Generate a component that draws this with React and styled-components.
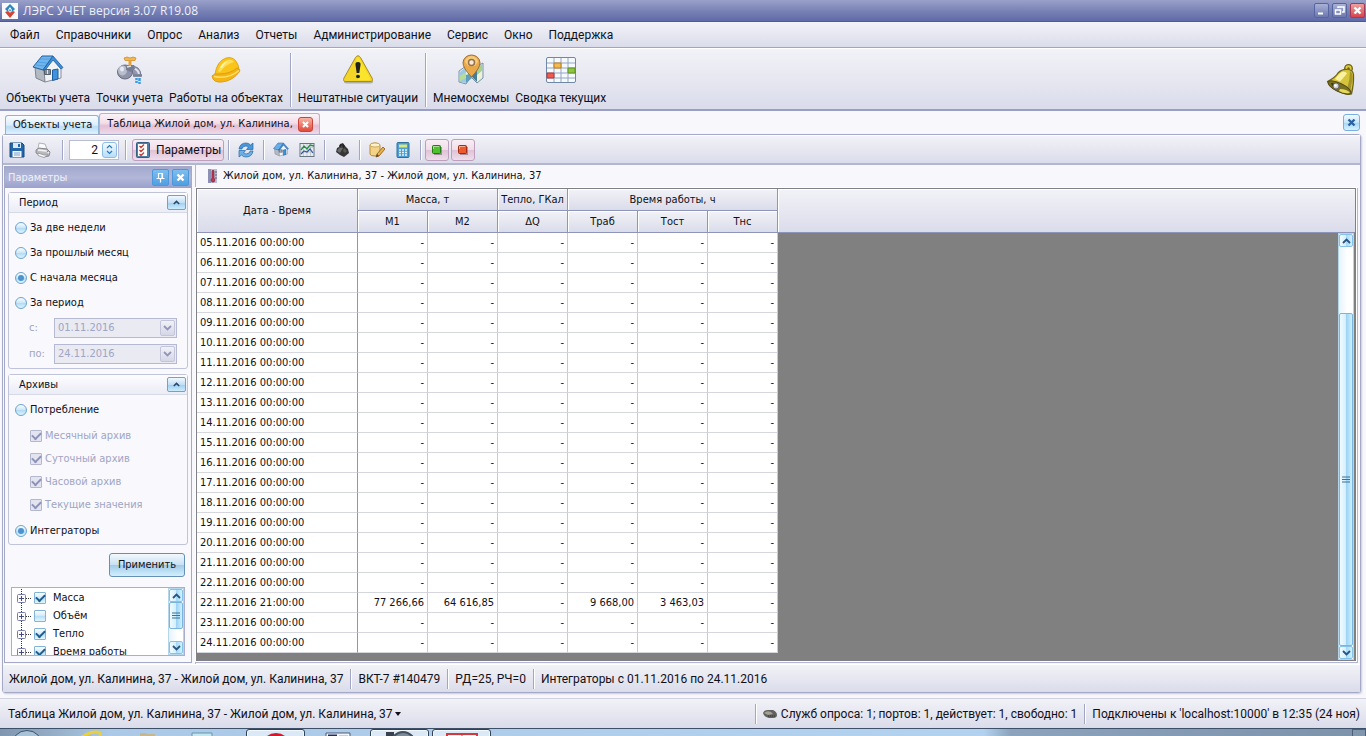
import { useState } from "react";
import styled, { createGlobalStyle, css } from "styled-components";

const ui = `Roboto, "Noto Sans", sans-serif`;
const small = `"DejaVu Sans Condensed", "DejaVu Sans", sans-serif`;

const GlobalStyle = createGlobalStyle`
  * {
    box-sizing: border-box;
  }
  body {
    margin: 0;
    font-family: ${ui};
    font-size: 12px;
    line-height: 16px;
    color: #101018;
    background: #f8f8fc;
  }
  button, input {
    font: inherit;
    color: inherit;
    margin: 0;
    padding: 0;
  }
`;

const barFill = css`
  background: linear-gradient(#f2f2f8, #e6e7f0 50%, #dadceb);
`;

const Window = styled.div`
  display: flex;
  flex-direction: column;
  height: 100vh;
  overflow: hidden;
  white-space: nowrap;
`;

const TitleBar = styled.header`
  display: flex;
  align-items: center;
  gap: 5px;
  height: 22px;
  padding: 0 1px 0 2px;
  background: linear-gradient(#9aa1c9, #7983b6 50%, #5f6ba7);
  border-bottom: 1px solid #4e5a94;
  color: #eef0fa;
  font-family: "Open Sans", ${small};
`;

const TitleText = styled.span`
  flex: 1;
`;

const WindowButton = styled.button`
  display: flex;
  width: 15px;
  height: 15px;
  margin-left: -2px;
  border: 1px solid ${(props) => (props.$danger ? "#a33a50" : "#5664a0")};
  border-radius: 2px;
  background: ${(props) =>
    props.$danger
      ? "linear-gradient(#f0a0a0, #d8434c)"
      : "linear-gradient(#a9b1d5, #6c78b0)"};
`;

const MenuBar = styled.nav`
  display: flex;
  align-items: center;
  gap: 16px;
  height: 26px;
  padding: 0 10px;
  ${barFill}
  border-bottom: 1px solid #9fa5c6;
`;

const MenuLink = styled.a`
  color: inherit;
  text-decoration: none;
`;

const MainBar = styled.div`
  display: flex;
  align-items: center;
  height: 63px;
  padding: 2px 8px 0 3px;
  ${barFill}
  border-top: 1px solid #fff;
  border-bottom: 2px solid #9a9fc4;
`;

const MainButton = styled.button`
  display: flex;
  flex-direction: column;
  align-items: center;
  gap: 4px;
  padding: 0 3px;
  border: 0;
  background: none;
`;

const BarDivider = styled.i`
  width: 1px;
  height: ${(props) => props.$height || 20}px;
  margin: 0 ${(props) => props.$gap || 4}px;
  background: #a0a6c4;
  box-shadow: 1px 0 #fff;
`;

const Spacer = styled.span`
  flex: 1;
`;

const TabStrip = styled.div`
  display: flex;
  align-items: flex-end;
  height: 23px;
  padding: 0 6px 0 5px;
  font-family: ${small};
  font-size: 11px;
`;

const Tab = styled.button`
  display: flex;
  align-items: center;
  gap: 5px;
  height: ${(props) => (props.$active ? 21 : 19)}px;
  padding: 0 6px 0 7px;
  border: 1px solid ${(props) => (props.$active ? "#c9a9c4" : "#8fb3d3")};
  border-bottom: 0;
  border-radius: 3px 3px 0 0;
  background: ${(props) =>
    props.$active
      ? "linear-gradient(#fbf3f8, #f3dde9 45%, #e3bfd4 60%, #efdbe8)"
      : "linear-gradient(#fafdff, #dcedfb 50%, #b9dcf6 60%, #dff3fd)"};
`;

const CloseBox = styled.button`
  display: flex;
  align-items: center;
  justify-content: center;
  align-self: center;
  width: 17px;
  height: 17px;
  border: 1px solid #79aee0;
  border-radius: 3px;
  background: linear-gradient(#f3fbff, #c4e6fb 50%, #a4d6f7 51%, #d6f3ff);
`;

const TabClose = styled.span`
  display: flex;
  align-items: center;
  justify-content: center;
  width: 15px;
  height: 15px;
  border: 1px solid #c8453c;
  border-radius: 3px;
  background: linear-gradient(#f9b5a6, #df4a38);
`;

const Document = styled.main`
  display: flex;
  flex: 1;
  flex-direction: column;
  min-height: 0;
  margin: 0 5px 5px 2px;
  border: 1px solid #a4a9c8;
  border-radius: 3px;
  box-shadow: 1px 1px 2px #c9c9d6;
  background: #f8f8fc;
`;

const ToolBar = styled.div`
  display: flex;
  align-items: center;
  height: 30px;
  padding: 0 1px;
  ${barFill}
  border-top: 1px solid #fff;
  border-bottom: 2px solid #b2b6d0;
`;

const ToolButton = styled.button`
  display: flex;
  align-items: center;
  justify-content: center;
  gap: 5px;
  min-width: ${(props) => (props.$checked ? 24 : 26)}px;
  height: 22px;
  border: 1px solid transparent;
  border-radius: 3px;
  background: none;
  ${(props) =>
    props.$checked &&
    css`
      padding: 0 2px;
      border-color: #bd9fbd;
      background: linear-gradient(#f8eef5, #f1dde9 48%, #dfc2d6 52%, #eedeeb);
    `}
`;

const ButtonPair = styled.div`
  display: flex;
  gap: 2px;
`;

const Spin = styled.div`
  display: flex;
  width: 50px;
  height: 20px;
  padding: 1px;
  border: 1px solid #b8bdd4;
  background: #fff;
`;

const SpinInput = styled.input`
  flex: 1;
  min-width: 0;
  padding-right: 4px;
  border: 0;
  outline: 0;
  text-align: right;
  background: none;
`;

const SpinButton = styled.button`
  display: flex;
  align-items: center;
  justify-content: center;
  width: 15px;
  border: 1px solid #8dbbe4;
  border-radius: 3px;
  background: linear-gradient(#f2faff, #b8defa);
`;

const Workspace = styled.div`
  display: flex;
  flex: 1;
  min-height: 0;
  gap: 3px;
`;

const Side = styled.aside`
  display: flex;
  flex-direction: column;
  width: 188px;
  margin: 1px 0 1px 1px;
  border: 1px solid #a4a9c8;
  background: #f8f8fd;
  font-family: ${small};
  font-size: 11px;
`;

const SideTitle = styled.div`
  display: flex;
  align-items: center;
  gap: 3px;
  height: 21px;
  padding: 0 2px 0 3px;
  color: #f0f1fa;
  background: linear-gradient(#a3a9ce, #b2b7d9 50%, #9aa1cb);
`;

const SideTitleButton = styled.button`
  display: flex;
  align-items: center;
  justify-content: center;
  width: 17px;
  height: 17px;
  border: 1px solid #4d97d6;
  border-radius: 2px;
  background: linear-gradient(#7fbdf0, #4f9fe2);
`;

const Group = styled.fieldset`
  display: flex;
  flex-direction: column;
  min-width: 0;
  margin: 4px 3px 1px;
  padding: 0 0 1px;
  border: 1px solid #c0c4da;
  border-radius: 3px;
`;

const GroupHead = styled.div`
  display: flex;
  align-items: center;
  justify-content: space-between;
  height: 20px;
  margin-bottom: 2px;
  padding: 0 1px 0 10px;
  border-bottom: 1px solid #d6d9e8;
  background: linear-gradient(#fdfdff, #ebecf5);
`;

const Collapse = styled.button`
  display: flex;
  align-items: center;
  justify-content: center;
  width: 19px;
  height: 15px;
  border: 1px solid #7c9dc4;
  border-radius: 2px;
  background: linear-gradient(#f0f8fe, #c2dff5 50%, #9ecdf0 52%, #ccecfc);
`;

const Choice = styled.label`
  display: flex;
  align-items: center;
  gap: 3px;
  height: ${(props) => (props.$nested ? 23 : 25)}px;
  padding-left: ${(props) => (props.$nested ? 21 : 6)}px;
  color: ${(props) => (props.$nested ? "#a0a5c4" : "inherit")};
`;

const CheckGroup = styled.div`
  padding: 2px 0;
`;

const Radio = styled.input`
  appearance: none;
  display: grid;
  place-items: center;
  width: 12px;
  height: 12px;
  border: 1px solid #6ba3cf;
  border-radius: 50%;
  background: linear-gradient(#fafdff, #c9e6f8 50%, #b1daf4 52%, #dff5ff);
  &:checked::after {
    content: "";
    width: 6px;
    height: 6px;
    border-radius: 50%;
    background: #4d94cf;
  }
`;

const Check = styled.input`
  appearance: none;
  display: grid;
  place-items: center;
  width: 12px;
  height: 12px;
  border: 1px solid #85b3d6;
  border-radius: 1px;
  background: linear-gradient(#fafdff, #cfeafa 50%, #b6def6 52%, #e2f7ff);
  &:checked::after {
    content: "";
    width: 7px;
    height: 4px;
    margin-bottom: 2px;
    border: solid #1f5c8e;
    border-width: 0 0 2px 2px;
    transform: rotate(-45deg);
  }
  &:disabled {
    border-color: #b3b7d0;
    background: #e3e4ef;
  }
  &:disabled:checked::after {
    border-color: #8d92b8;
  }
`;

const DateRow = styled.div`
  display: flex;
  align-items: center;
  height: 26px;
  padding: 0 10px 0 20px;
  color: #a0a5c4;
`;

const DateLabel = styled.label`
  flex: 0 0 25px;
`;

const DateBox = styled.div`
  display: flex;
  flex: 1;
  min-width: 0;
  height: 20px;
  padding: 1px;
  border: 1px solid #b5b9d2;
  background: #e9eaf2;
`;

const DateInput = styled.input`
  flex: 1;
  min-width: 0;
  padding-left: 2px;
  border: 0;
  background: none;
  color: #a0a5c4;
`;

const DateButton = styled.button`
  display: flex;
  align-items: center;
  justify-content: center;
  width: 15px;
  border: 1px solid #c3c6da;
  border-radius: 2px;
  background: linear-gradient(#f1f1f8, #d5d7e7);
`;

const ApplyButton = styled.button`
  align-self: flex-end;
  width: 76px;
  height: 24px;
  margin: 7px 6px 10px;
  border: 1px solid #6590b4;
  border-radius: 3px;
  background: linear-gradient(#f2f9fe, #c9e1f3 48%, #a3cbe9 52%, #d2effc);
`;

const TreeBox = styled.div`
  display: flex;
  flex: 1;
  min-height: 0;
  margin: 0 6px 6px;
  border: 1px solid #a9aecb;
  background: #fff;
  overflow: hidden;
`;

const Tree = styled.ul`
  flex: 1;
  margin: 0;
  padding: 1px 0 0 4px;
  list-style: none;
`;

const TreeItem = styled.li`
  display: flex;
  align-items: center;
  height: 18px;
`;

const TreeLabel = styled.label`
  display: flex;
  align-items: center;
  gap: 7px;
`;

const Scroll = styled.div`
  display: flex;
  flex-direction: column;
  width: 16px;
  border: 1px solid #b5d6ea;
  background: linear-gradient(90deg, #e6f3fc, #fff 60%);
`;

const ScrollArrow = styled.button`
  display: flex;
  align-items: center;
  justify-content: center;
  height: 13px;
  border: 1px solid #86c2e8;
  border-radius: 2px;
  background: linear-gradient(90deg, #f2fbff, #d2effd 50%, #a5d7f6 52%, #d0f3ff);
`;

const Thumb = styled.div`
  display: flex;
  flex: ${(props) => props.$grow};
  align-items: center;
  justify-content: center;
  border: 1px solid #79b5dd;
  border-radius: 2px;
  background: linear-gradient(90deg, #f0faff, #d2effd 50%, #9fd2f3 54%, #cdf1ff);
`;

const Track = styled.div`
  flex: ${(props) => props.$grow};
`;

const Content = styled.section`
  display: flex;
  flex: 1;
  flex-direction: column;
  min-width: 0;
  border-left: 1px solid #b2b6d0;
  font-family: ${small};
  font-size: 11px;
`;

const ContentTitle = styled.h1`
  display: flex;
  align-items: center;
  gap: 4px;
  height: 23px;
  margin: 0;
  padding: 0 0 2px 11px;
  font-size: 11px;
  font-weight: normal;
`;

const GridFrame = styled.div`
  position: relative;
  flex: 1;
  min-height: 0;
  margin: 0 4px 3px 0;
  border: 1px solid #7f7f88;
  box-shadow: 0 0 0 1px #fff, 1px 1px 0 1px #b2b6d0;
  background: #808080;
  overflow: hidden;
`;

const DataTable = styled.table`
  width: 100%;
  table-layout: fixed;
  border-collapse: separate;
  border-spacing: 0;
`;

const DateCol = styled.col`
  width: 161px;
`;

const ValueCol = styled.col`
  width: 70px;
`;

const HeadCell = styled.th`
  height: 22px;
  padding: 0;
  font-weight: normal;
  border-right: 1px solid ${(props) => (props.$fill ? "transparent" : "#8f95b8")};
  border-bottom: 1px solid #8f95b8;
  box-shadow: inset 1px 1px #fff;
  ${barFill}
`;

const Cell = styled.td`
  height: 20px;
  padding: 0 3px;
  line-height: 16px;
  text-align: right;
  border-right: 1px solid #c9cad4;
  border-bottom: 1px solid #d5d6de;
  background: #fff;
`;

const DateCell = styled(Cell)`
  text-align: left;
  border-right-color: #8f95b8;
`;

const EmptyCell = styled.td`
  padding: 0;
  background: #808080;
`;

const GridScroll = styled(Scroll)`
  position: absolute;
  top: 44px;
  right: 1px;
  bottom: 0;
`;

const StatusBar = styled.footer`
  display: flex;
  align-items: center;
  height: ${(props) => (props.$outer ? 30 : 28)}px;
  padding: 0 6px;
  ${barFill}
  border-top: ${(props) => (props.$outer ? "1px solid #d0d2e0" : "1px solid #fff")};
`;

const StatusText = styled.span`
  display: flex;
  align-items: center;
  gap: 4px;
`;

const StatusMenu = styled.button`
  display: flex;
  align-items: center;
  gap: 2px;
  padding: 0 2px;
  border: 0;
  background: none;
`;

const TaskBar = styled.div`
  display: flex;
  align-items: flex-start;
  height: 8px;
  padding-left: 10px;
  border-top: 1px solid #3d5068;
  background: linear-gradient(
    90deg,
    #7f97ae,
    #90a8c0 3%,
    #abc9e6 8%,
    #b3d2f0 72%,
    #8ba3bb 74%,
    #7c93aa
  );
  overflow: hidden;
`;

const TaskSlot = styled.span`
  display: flex;
  justify-content: center;
  width: ${(props) => props.$width}px;
  height: 40px;
  ${(props) =>
    props.$open &&
    css`
      border: 1px solid #2f4256;
      border-radius: 3px;
      background: #dbe8f6;
      box-shadow: inset 0 0 0 1px #f2f8ff;
    `}
`;

const TrayEdge = styled.span`
  width: 14px;
  height: 40px;
  border: 1px solid #4b6076;
  background: #8197ad;
`;

const Svg = ({ size = 16, box = size, children }) => (
  <svg
    width={size}
    height={size}
    viewBox={`0 0 ${box} ${box}`}
    fill="none"
    aria-hidden="true"
  >
    {children}
  </svg>
);

const AppIcon = () => (
  <Svg>
    <rect width="16" height="16" fill="#f7f9fc" />
    <path d="M8 1l5 5-2 2H5L3 6z" fill="#2d87b8" />
    <path d="M3 9l3-1 2 1 3-1 2 1-5 6z" fill="#d34235" />
    <path d="M6 7l2-3 2 3-2 3z" fill="#fff" />
    <path d="M7 7l1-1 1 1-1 2z" fill="#2d87b8" />
  </Svg>
);

const MinimizeIcon = () => (
  <Svg size={13}>
    <path d="M3 9.500h5" stroke="#fff" strokeWidth="2" />
  </Svg>
);

const RestoreIcon = () => (
  <Svg size={13}>
    <path d="M5 4V3h6v5h-2" stroke="#fff" strokeWidth="1.500" />
    <path d="M2.500 6h5v4h-5z" stroke="#fff" strokeWidth="1.500" />
  </Svg>
);

const CrossIcon = ({ color = "#fff", size = 13 }) => (
  <Svg size={size} box={13}>
    <path d="M3.500 3.500l6 6M9.500 3.500l-6 6" stroke={color} strokeWidth="2.400" />
  </Svg>
);

const HouseIcon = ({ size = 32 }) => (
  <Svg size={size} box={32}>
    <path d="M3 13l9 2 1 13-9-4z" fill="#b4bac2" stroke="#7c848e" />
    <path d="M12 16l9-11 8 10v9l-16 4z" fill="#f1f3f5" stroke="#868d97" />
    <path d="M10 2h11L11 16 1 13z" fill="#6fb5ee" stroke="#1f5f9e" />
    <path d="M8 5h10M6 8l9 1M4 11l9 1" stroke="#4b99dc" strokeWidth=".8" />
    <path d="M21 2l10 11.500-2 1.500-8-9-8.500 11-1.500-1z" fill="#3c8fda" stroke="#1f5f9e" strokeWidth=".8" />
    <path d="M20.500 16l5.500-1v10l-5.500 1.500z" fill="#3f93de" stroke="#1d5d9d" />
    <path d="M12.500 15.500h6v5h-6z" fill="#7d8996" stroke="#555f6b" />
    <path d="M15.500 16v4" stroke="#dfe5ec" />
  </Svg>
);

const TapIcon = () => (
  <Svg size={32}>
    <path d="M10 4q3-2 6 0 3-2 6 0l-1 2.500H11z" fill="#f3b750" stroke="#cf8f28" strokeWidth=".8" />
    <path d="M14.500 6h3v6h-3z" fill="#e0a03c" />
    <path d="M15 12q12-1 12 10h-7q0-4-5-4z" fill="#9398ae" stroke="#646a80" strokeWidth=".8" />
    <path d="M16 14q8 0 9 6" stroke="#dfe2ec" strokeWidth="2" />
    <ellipse cx="11" cy="18" rx="7.500" ry="7" fill="#8f94aa" stroke="#666b80" />
    <ellipse cx="8.500" cy="16.500" rx="4.500" ry="5" fill="#b9bdcc" />
    <ellipse cx="8" cy="15" rx="2" ry="2.500" fill="#e8eaf2" />
    <path d="M12 11h8l1 4-4 3-5-2z" fill="#767c93" />
    <path d="M13 13l4-1" stroke="#dfe2ec" strokeWidth="1.500" />
    <path d="M19 21.500h9" stroke="#7a8096" strokeWidth="2.500" />
    <path d="M22.500 24v5M25.500 24v6" stroke="#3b9be4" strokeWidth="2.500" />
    <path d="M22.500 26v1M25.500 27v1" stroke="#d3ecfb" strokeWidth="2.500" />
  </Svg>
);

const HelmetIcon = () => (
  <Svg size={32}>
    <path d="M5 20Q7 7 16 4q6-1.500 9.500 2.500Q29 11 29 16L12 26z" fill="#fbc41a" stroke="#d99c0e" strokeWidth=".8" />
    <path d="M8 17q3-9 10-11 4-1 6 2-8 2-14 10z" fill="#ffdf58" />
    <path d="M10 14q3-6 8-7-4 3-6 7z" fill="#fff3b4" />
    <path d="M2 22q2-3 7-2 11 0 18-6 3 1 3 3-7 10-18 11-9 1-10-6z" fill="#f6b414" stroke="#d6970c" strokeWidth=".8" />
    <path d="M4 22.500q14 3 25-6" stroke="#ffe169" strokeWidth="1.500" />
  </Svg>
);

const WarningIcon = () => (
  <Svg size={32}>
    <path
      d="M13.500 4.500q2.500-4 5 0L30 25q2 4-2 4H4q-4 0-2-4z"
      fill="#77775a"
      transform="translate(.5 .5)"
      opacity=".5"
    />
    <path d="M13.500 3.500q2.500-3.500 5 0L30 24q1.500 3.500-2 3.500H4Q.5 27.500 2 24z" fill="#f4d526" stroke="#a58b27" />
    <path d="M14.500 5q1.500-2 3 0l11 20-1.500 1H16z" fill="#ffee30" opacity=".6" />
    <path d="M16 8q3 0 2.500 3L17.300 19h-2.600L13.500 11Q13 8 16 8z" fill="#20211c" />
    <ellipse cx="16" cy="22.500" rx="2" ry="1.800" fill="#20211c" />
  </Svg>
);

const MapIcon = () => (
  <Svg size={32}>
    <path d="M4 17l7-5 6 6 5-6 6-3v15l-6 5-6-6-5 7-7-2z" fill="#e4f0e8" stroke="#7893a8" />
    <path d="M5 18l6-5v16l-6-1z" fill="#9bc9e6" />
    <path d="M5 22l6-4v6l-6 3z" fill="#b8dc98" />
    <path d="M11 21l6-2v5l-6 5z" fill="#5e9fbd" />
    <path d="M17 19l5-6v15l-5-5z" fill="#447d99" />
    <path d="M22 14l5-4v7l-5 4z" fill="#a8d18b" />
    <path d="M22 22l5-5v5l-5 4z" fill="#f2f1d6" />
    <path d="M16.500 23Q8 14 8 9a8.500 8 0 0 1 17 0q0 5-8.500 14z" fill="#e9a94b" stroke="#9b6f3b" />
    <path d="M10 8a6.500 6 0 0 1 13 0l-3 4h-7z" fill="#f5cb7c" />
    <circle cx="16.500" cy="8.500" r="3" fill="#f6ead7" stroke="#97714a" strokeWidth="1.500" />
  </Svg>
);

const CalendarIcon = () => (
  <Svg size={32}>
    <rect x="1.500" y="3.500" width="29" height="25" rx="1.500" fill="#f7fafd" stroke="#6f88a8" />
    <path d="M9 4v24M16 4v24M23 4v24M2 9h28M2 14h28M2 19h28M2 24h28" stroke="#91a6c4" />
    <path d="M9 9h7v5H9z" fill="#f4b951" stroke="#be7d1c" />
    <path d="M23 14h7v5h-7z" fill="#8dc63f" stroke="#5e9320" />
    <path d="M2 19h7v5H2z" fill="#ef5a50" stroke="#b93530" />
  </Svg>
);

const BellIcon = () => (
  <Svg size={32}>
    <circle cx="22.500" cy="4.500" r="3.800" fill="#dccb3e" stroke="#6b6019" strokeWidth="1.300" />
    <circle cx="22.500" cy="4.500" r="1.200" fill="#6b6019" />
    <path d="M1.500 17.500Q10 13 12 9q4-4 9-3.500 6 0 6.500 5 .5 9-2 19.500-4 1-9-1-12-4-15-11.500z" fill="#d6c53c" stroke="#6b6019" strokeWidth="1.200" />
    <path d="M9 15q5-7 8-7.500 3 0 4 2-5 6-7 8z" fill="#f8f1a0" />
    <path d="M24 7q3 2 2.500 8L24 28l-3-3q3-9 3-18z" fill="#a59629" />
    <ellipse cx="13.500" cy="23.500" rx="12.500" ry="4.200" transform="rotate(26 13.500 23.500)" fill="#7a7023" stroke="#584e14" />
    <path d="M14 25q7 0 10 4-6 1-11-2z" fill="#e5d85e" />
    <path d="M5 19q4 0 7 2l-2 4q-4-2-5-6z" fill="#39351d" />
    <circle cx="10" cy="22" r="3" fill="#cfcfd2" stroke="#5a5a5a" strokeWidth=".8" />
    <circle cx="9.500" cy="21.500" r="1.200" fill="#fff" />
  </Svg>
);

const SaveIcon = () => (
  <Svg>
    <path d="M1 1h12l2 2v12H1z" fill="#2465a8" stroke="#174a82" />
    <path d="M4 1h8v5H4z" fill="#dbe7f2" />
    <path d="M9 2h2v3H9z" fill="#2465a8" />
    <path d="M3.500 9h9v6h-9z" fill="#eef4f9" />
    <path d="M5 11h6M5 13h6" stroke="#7aa4cc" />
  </Svg>
);

const PrintIcon = () => (
  <Svg>
    <path d="M3 7l1-6 6 1 2 5z" fill="#fafafa" stroke="#a0a0a4" strokeWidth=".8" />
    <path d="M1 8l3-2 8 1 3 3-1 4-5 1-8-4z" fill="#b9babd" stroke="#77787d" strokeWidth=".8" />
    <path d="M3 8l8 1 3 2" stroke="#f4f4f6" strokeWidth="1.500" />
    <path d="M3 11l6 2 4 0-4 2.500-6-2z" fill="#fbfbfb" stroke="#909196" strokeWidth=".8" />
    <circle cx="12.500" cy="9.500" r=".8" fill="#5cae45" />
  </Svg>
);

const ListIcon = () => (
  <Svg>
    <rect x="1.500" y=".5" width="13" height="15" rx="1" fill="#4f7ea6" stroke="#355f84" />
    <path d="M3 2h9v12H3z" fill="#fdfdfd" />
    <path d="M4.500 4l1.500 1.500L9 2.500M4.500 8L6 9.500l3-3M4.500 12L6 13.500l3-3" stroke="#c43a33" strokeWidth="1.300" />
  </Svg>
);

const RefreshIcon = () => (
  <Svg>
    <path d="M1 7q1-6 7-6 3 0 4.500 2L15 1v6.500H8.500L10.500 5Q8 3 5 5 4 6 4 7z" fill="#4a96d6" stroke="#2268aa" strokeWidth=".7" />
    <path d="M15 9q-1 6-7 6-3 0-4.500-2L1 15V8.500h6.500L5.500 11Q8 13 11 11q1-1 1-2z" fill="#6db0e6" stroke="#2268aa" strokeWidth=".7" />
  </Svg>
);

const ChartIcon = () => (
  <Svg>
    <rect x="1" y="1.500" width="14" height="13" fill="#e8ecf0" stroke="#687684" />
    <path d="M4.500 2v12M8 2v12M11.500 2v12M1 5.500h14M1 10h14" stroke="#b4bdc6" strokeWidth=".7" />
    <path d="M2 8l3-4 3 3 3-4 4 1" stroke="#2b8f48" strokeWidth="1.300" />
    <path d="M2 12l3-3 3 1 3-3 3 4" stroke="#2d5c9c" strokeWidth="1.200" />
  </Svg>
);

const StoneIcon = () => (
  <Svg>
    <path d="M5 5l1-3 3-1 2 3 3 3 1 4-5 4-4-2-4-3 1-4z" fill="#363636" />
    <path d="M6 5l2-2 1 3-3 5-3-2z" fill="#6b6b6b" />
    <path d="M10 6l3 3-2 2-2-2z" fill="#585858" />
    <path d="M6 3h4v2H6z" stroke="#1d1d1d" />
  </Svg>
);

const EditIcon = () => (
  <Svg>
    <path d="M1 3q0-2 5-2t5 2v9q0 2-5 2t-5-2z" fill="#f3d388" stroke="#bb8b35" />
    <ellipse cx="6" cy="3" rx="5" ry="2" fill="#fff1cc" stroke="#c79a48" strokeWidth=".8" />
    <path d="M7 15l1-3 6-7 2 2-6 7z" fill="#eeb046" stroke="#8f6528" strokeWidth=".9" />
    <path d="M7 15l1-3 2 2z" fill="#55442b" />
  </Svg>
);

const CalcIcon = () => (
  <Svg>
    <rect x="2" y=".5" width="12" height="15" rx="1" fill="#4e9ed2" stroke="#2f709f" />
    <path d="M4 2.500h8v3H4z" fill="#d6e980" />
    <path d="M4 8h8M4 10.500h8M4 13h8" stroke="#e3f3fc" strokeWidth="1.500" strokeDasharray="2 1" />
  </Svg>
);

const SquareIcon = ({ light, dark }) => (
  <Svg>
    <path d="M5 5h8v8H5z" fill="#6c5a66" opacity=".55" />
    <rect x="3.500" y="3.500" width="8" height="8" rx="1" fill={light} stroke={dark} />
    <path d="M4.500 7V4.500H10" stroke="#fff" opacity=".5" />
  </Svg>
);

const ThermoIcon = () => (
  <svg width="12" height="14" viewBox="0 0 12 14" aria-hidden="true">
    <path d="M1 0h9v14H1z" fill="#b9bdd2" />
    <path d="M1 0h3v14H1z" fill="#8c90b4" />
    <path d="M5 2q1-2 2 0v7q2 2 0 4H5q-2-2 0-4z" fill="#c03a50" stroke="#7d2337" strokeWidth=".6" />
    <path d="M8 3h2M8 6h2M8 9h2" stroke="#5d6280" />
  </svg>
);

const PinIcon = () => (
  <Svg size={13}>
    <path d="M4.500 2.500h4v5h-4zM8 2.500v5M2.500 7.500h8M6.500 8v3.500" stroke="#fff" strokeWidth="1.200" />
  </Svg>
);

const Chevron = ({ up, color = "#2b557f" }) => (
  <svg width="9" height="6" viewBox="0 0 9 6" fill="none" aria-hidden="true">
    <path d={up ? "M1 5l3.500-3.500L8 5" : "M1 1l3.500 3.500L8 1"} stroke={color} strokeWidth="1.800" />
  </svg>
);

const SmallChevron = () => (
  <svg width="7" height="5" viewBox="0 0 9 6" fill="none" aria-hidden="true">
    <path d="M1 5l3.500-3.500L8 5" stroke="#24486e" strokeWidth="2" />
  </svg>
);

const GripIcon = () => (
  <svg width="8" height="7" viewBox="0 0 8 7" aria-hidden="true">
    <path d="M0 1h8M0 3.500h8M0 6h8" stroke="#3d7093" />
  </svg>
);

const SpinIcon = () => (
  <svg width="7" height="11" viewBox="0 0 7 11" fill="none" aria-hidden="true">
    <path d="M1 4l2.500-2.500L6 4M1 7l2.500 2.500L6 7" stroke="#2e76b5" strokeWidth="1.200" />
  </svg>
);

const BranchIcon = () => (
  <svg width="18" height="18" viewBox="0 0 18 18" fill="none" aria-hidden="true">
    <path d="M5.500 0v18M10 9.500h6" stroke="#333" strokeDasharray="1 1" />
    <rect x="1.500" y="5.500" width="8" height="8" rx="1" fill="#fafaff" stroke="#787eab" />
    <path d="M3 9.500h5M5.500 7v5" stroke="#444b83" />
  </svg>
);

const PortIcon = () => (
  <svg width="14" height="10" viewBox="0 0 14 10" aria-hidden="true">
    <path d="M0 4q1-3 5-3h5q4 2 4 5 0 3-4 3H6Q1 8 0 4z" fill="#62605d" />
    <path d="M1 4q3-3 7-1l2 2-5 1z" fill="#a3a099" />
    <path d="M5 7h7" stroke="#2f2e2c" strokeDasharray="1 1" />
  </svg>
);

const menu = [
  "Файл",
  "Справочники",
  "Опрос",
  "Анализ",
  "Отчеты",
  "Администрирование",
  "Сервис",
  "Окно",
  "Поддержка",
];

const periods = ["За две недели", "За прошлый месяц", "С начала месяца", "За период"];
const archives = ["Месячный архив", "Суточный архив", "Часовой архив", "Текущие значения"];
const parameters = [
  ["Масса", true],
  ["Объём", false],
  ["Тепло", true],
  ["Время работы", true],
];
const columns = ["М1", "М2", "ΔQ", "Траб", "Тост", "Тнс"];

const emptyValues = ["-", "-", "-", "-", "-", "-"];
const rows = [];
for (let day = 5; day <= 24; day++) {
  const date = `${String(day).padStart(2, "0")}.11.2016`;
  rows.push({ time: `${date} 00:00:00`, values: emptyValues });
  if (day === 22) {
    rows.push({
      time: `${date} 21:00:00`,
      values: ["77 266,66", "64 616,85", "-", "9 668,00", "3 463,03", "-"],
    });
  }
}

const SidePanel = () => {
  const [period, setPeriod] = useState("С начала месяца");
  const [source, setSource] = useState("Интеграторы");

  const sourceChoice = (name) => (
    <Choice>
      <Radio
        type="radio"
        name="source"
        checked={source === name}
        onChange={() => setSource(name)}
      />
      {name}
    </Choice>
  );

  return (
    <Side>
      <SideTitle>
        <TitleText>Параметры</TitleText>
        <SideTitleButton aria-label="Закрепить">
          <PinIcon />
        </SideTitleButton>
        <SideTitleButton aria-label="Закрыть">
          <CrossIcon />
        </SideTitleButton>
      </SideTitle>
      <Group>
        <GroupHead>
          Период
          <Collapse aria-label="Свернуть">
            <SmallChevron />
          </Collapse>
        </GroupHead>
        {periods.map((name) => (
          <Choice key={name}>
            <Radio
              type="radio"
              name="period"
              checked={period === name}
              onChange={() => setPeriod(name)}
            />
            {name}
          </Choice>
        ))}
        <DateRow>
          <DateLabel htmlFor="from">с:</DateLabel>
          <DateBox>
            <DateInput id="from" defaultValue="01.11.2016" disabled />
            <DateButton aria-label="Выбрать" disabled>
              <Chevron color="#9297b8" />
            </DateButton>
          </DateBox>
        </DateRow>
        <DateRow>
          <DateLabel htmlFor="to">по:</DateLabel>
          <DateBox>
            <DateInput id="to" defaultValue="24.11.2016" disabled />
            <DateButton aria-label="Выбрать" disabled>
              <Chevron color="#9297b8" />
            </DateButton>
          </DateBox>
        </DateRow>
      </Group>
      <Group>
        <GroupHead>
          Архивы
          <Collapse aria-label="Свернуть">
            <SmallChevron />
          </Collapse>
        </GroupHead>
        {sourceChoice("Потребление")}
        <CheckGroup>
          {archives.map((name) => (
            <Choice key={name} $nested>
              <Check type="checkbox" defaultChecked disabled />
              {name}
            </Choice>
          ))}
        </CheckGroup>
        {sourceChoice("Интеграторы")}
      </Group>
      <ApplyButton>Применить</ApplyButton>
      <TreeBox>
        <Tree>
          {parameters.map(([name, checked]) => (
            <TreeItem key={name}>
              <BranchIcon />
              <TreeLabel>
                <Check type="checkbox" defaultChecked={checked} />
                {name}
              </TreeLabel>
            </TreeItem>
          ))}
        </Tree>
        <Scroll>
          <ScrollArrow aria-label="Вверх">
            <Chevron up />
          </ScrollArrow>
          <Thumb $grow={2}>
            <GripIcon />
          </Thumb>
          <Track $grow={1} />
          <ScrollArrow aria-label="Вниз">
            <Chevron />
          </ScrollArrow>
        </Scroll>
      </TreeBox>
    </Side>
  );
};

const DataGrid = () => (
  <GridFrame>
    <DataTable>
      <colgroup>
        <DateCol />
        {columns.map((name) => (
          <ValueCol key={name} />
        ))}
        <col />
      </colgroup>
      <thead>
        <tr>
          <HeadCell rowSpan={2}>Дата - Время</HeadCell>
          <HeadCell colSpan={2}>Масса, т</HeadCell>
          <HeadCell>Тепло, ГКал</HeadCell>
          <HeadCell colSpan={3}>Время работы, ч</HeadCell>
          <HeadCell rowSpan={2} $fill />
        </tr>
        <tr>
          {columns.map((name) => (
            <HeadCell key={name}>{name}</HeadCell>
          ))}
        </tr>
      </thead>
      <tbody>
        {rows.map((row) => (
          <tr key={row.time}>
            <DateCell>{row.time}</DateCell>
            {row.values.map((value, i) => (
              <Cell key={columns[i]}>{value}</Cell>
            ))}
            <EmptyCell />
          </tr>
        ))}
      </tbody>
    </DataTable>
    <GridScroll>
      <ScrollArrow aria-label="Вверх">
        <Chevron up />
      </ScrollArrow>
      <Track $grow={1} />
      <Thumb $grow={5}>
        <GripIcon />
      </Thumb>
      <ScrollArrow aria-label="Вниз">
        <Chevron />
      </ScrollArrow>
    </GridScroll>
  </GridFrame>
);

const Tasks = () => (
  <TaskBar>
    <TaskSlot $width={34}>
      <Svg size={34}>
        <circle cx="17" cy="17" r="15.500" fill="#a9c2d6" stroke="#38546e" />
      </Svg>
    </TaskSlot>
    <TaskSlot $width={94}>
      <Svg size={32}>
        <path d="M4 10Q14 2 22 3q4 0 3 4" stroke="#e8cf46" strokeWidth="3" />
        <path d="M8 14q8-8 14 0z" fill="#4f9ddd" />
      </Svg>
    </TaskSlot>
    <TaskSlot $width={20}>
      <Svg size={20}>
        <path d="M2 4h6l1 1h8v12H2z" fill="#c6b78e" />
      </Svg>
    </TaskSlot>
    <TaskSlot $width={88}>
      <Svg size={22}>
        <path d="M1 4h20v16H1z" fill="#c4e7ee" stroke="#6995b0" />
      </Svg>
    </TaskSlot>
    <TaskSlot $width={59} $open>
      <Svg size={32}>
        <circle cx="16" cy="18" r="15" fill="#d6172b" />
      </Svg>
    </TaskSlot>
    <TaskSlot $width={65}>
      <Svg size={26}>
        <path d="M1 4h24v20H1z" fill="#f2f5fa" stroke="#4f5c75" />
        <path d="M3 7h9" stroke="#1f2c66" strokeWidth="3" />
        <path d="M14 7h9" stroke="#a1a9b8" />
      </Svg>
    </TaskSlot>
    <TaskSlot $width={59} $open>
      <Svg size={34}>
        <path d="M3 2h8v5H3z" fill="#38414d" />
        <circle cx="20" cy="14" r="12" fill="#7d8b98" stroke="#44505d" strokeWidth="2" />
      </Svg>
    </TaskSlot>
    <TaskSlot $width={3} />
    <TaskSlot $width={59} $open>
      <Svg size={32}>
        <path d="M1 4h30v26H1z" fill="#fff" stroke="#d2383c" strokeWidth="2" />
        <path d="M16 5v3" stroke="#d2383c" />
      </Svg>
    </TaskSlot>
    <Spacer />
    <TrayEdge />
  </TaskBar>
);

const App = () => {
  const [count, setCount] = useState("2");

  return (
    <Window>
      <GlobalStyle />
      <TitleBar>
        <AppIcon />
        <TitleText>ЛЭРС УЧЕТ версия 3.07 R19.08</TitleText>
        <WindowButton aria-label="Свернуть">
          <MinimizeIcon />
        </WindowButton>
        <WindowButton aria-label="Восстановить">
          <RestoreIcon />
        </WindowButton>
        <WindowButton aria-label="Закрыть" $danger>
          <CrossIcon />
        </WindowButton>
      </TitleBar>
      <MenuBar>
        {menu.map((name) => (
          <MenuLink key={name} href="#">
            {name}
          </MenuLink>
        ))}
      </MenuBar>
      <MainBar>
        <MainButton>
          <HouseIcon />
          Объекты учета
        </MainButton>
        <MainButton>
          <TapIcon />
          Точки учета
        </MainButton>
        <MainButton>
          <HelmetIcon />
          Работы на объектах
        </MainButton>
        <BarDivider $height={54} />
        <MainButton>
          <WarningIcon />
          Нештатные ситуации
        </MainButton>
        <BarDivider $height={54} />
        <MainButton>
          <MapIcon />
          Мнемосхемы
        </MainButton>
        <MainButton>
          <CalendarIcon />
          Сводка текущих
        </MainButton>
        <Spacer />
        <BellIcon />
      </MainBar>
      <TabStrip>
        <Tab>Объекты учета</Tab>
        <Tab $active>
          Таблица Жилой дом, ул. Калинина,
          <TabClose>
            <CrossIcon size={11} />
          </TabClose>
        </Tab>
        <Spacer />
        <CloseBox aria-label="Закрыть">
          <CrossIcon color="#2a63a0" />
        </CloseBox>
      </TabStrip>
      <Document>
        <ToolBar>
          <ToolButton aria-label="Сохранить">
            <SaveIcon />
          </ToolButton>
          <ToolButton aria-label="Печать">
            <PrintIcon />
          </ToolButton>
          <BarDivider $gap={6} />
          <Spin>
            <SpinInput
              aria-label="Количество"
              value={count}
              onChange={(e) => setCount(e.target.value)}
            />
            <SpinButton aria-label="Изменить">
              <SpinIcon />
            </SpinButton>
          </Spin>
          <BarDivider $gap={6} />
          <ToolButton $checked>
            <ListIcon />
            Параметры
          </ToolButton>
          <BarDivider />
          <ToolButton aria-label="Обновить">
            <RefreshIcon />
          </ToolButton>
          <BarDivider />
          <ToolButton aria-label="Объект">
            <HouseIcon size={16} />
          </ToolButton>
          <ToolButton aria-label="График">
            <ChartIcon />
          </ToolButton>
          <BarDivider />
          <ToolButton aria-label="Прибор">
            <StoneIcon />
          </ToolButton>
          <BarDivider />
          <ToolButton aria-label="Изменить данные">
            <EditIcon />
          </ToolButton>
          <ToolButton aria-label="Калькулятор">
            <CalcIcon />
          </ToolButton>
          <BarDivider />
          <ButtonPair>
            <ToolButton aria-label="Зелёный" $checked>
              <SquareIcon light="#4fc12c" dark="#237a14" />
            </ToolButton>
            <ToolButton aria-label="Красный" $checked>
              <SquareIcon light="#ee5a2f" dark="#a12a12" />
            </ToolButton>
          </ButtonPair>
        </ToolBar>
        <Workspace>
          <SidePanel />
          <Content>
            <ContentTitle>
              <ThermoIcon />
              Жилой дом, ул. Калинина, 37 - Жилой дом, ул. Калинина, 37
            </ContentTitle>
            <DataGrid />
          </Content>
        </Workspace>
        <StatusBar>
          <StatusText>Жилой дом, ул. Калинина, 37 - Жилой дом, ул. Калинина, 37</StatusText>
          <BarDivider $gap={7} />
          <StatusText>ВКТ-7 #140479</StatusText>
          <BarDivider $gap={7} />
          <StatusText>РД=25, РЧ=0</StatusText>
          <BarDivider $gap={7} />
          <StatusText>Интеграторы с 01.11.2016 по 24.11.2016</StatusText>
        </StatusBar>
      </Document>
      <StatusBar $outer>
        <StatusMenu>
          Таблица Жилой дом, ул. Калинина, 37 - Жилой дом, ул. Калинина, 37
          <svg width="6" height="4" viewBox="0 0 6 4" aria-hidden="true">
            <path d="M0 0h6L3 4z" fill="#101018" />
          </svg>
        </StatusMenu>
        <Spacer />
        <BarDivider $gap={7} />
        <StatusText>
          <PortIcon />
          Служб опроса: 1; портов: 1, действует: 1, свободно: 1
        </StatusText>
        <BarDivider $gap={7} />
        <StatusText>Подключены к 'localhost:10000' в 12:35 (24 ноя)</StatusText>
      </StatusBar>
      <Tasks />
    </Window>
  );
};

export default App;
